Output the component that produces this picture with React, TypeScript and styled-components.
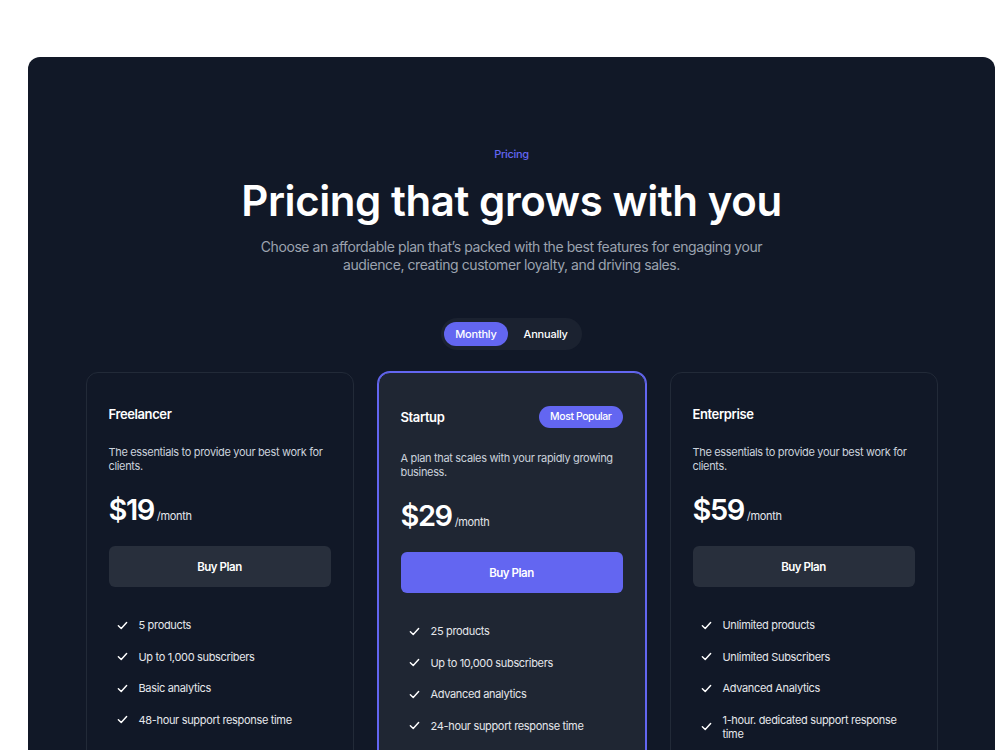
import React, { useState } from "react";
import styled, { createGlobalStyle } from "styled-components";

const GlobalStyle = createGlobalStyle`
  html, body {
    margin: 0;
    padding: 0;
    background: #ffffff;
    overflow: hidden;
    font-family: Inter, "Noto Sans", "Liberation Sans", sans-serif;
    -webkit-font-smoothing: antialiased;
  }
  * { box-sizing: border-box; }
`;

const Panel = styled.section`
  margin: 57px 5px 0 28px;
  min-height: 760px;
  background: #111827;
  border-radius: 12px;
  padding: 89px 0 0;
  display: flex;
  flex-direction: column;
  align-items: center;
`;

const Eyebrow = styled.p`
  margin: 0;
  font-size: 11px;
  line-height: 16px;
  font-weight: 500;
  letter-spacing: -0.03em;
  color: #6366f1;
`;

const Title = styled.h1`
  margin: 14px 0 0;
  font-size: 42px;
  line-height: 50px;
  font-weight: 600;
  letter-spacing: -0.01em;
  color: #ffffff;
`;

const Subtitle = styled.p`
  margin: 12px 0 0;
  max-width: 510px;
  text-align: center;
  font-size: 14px;
  line-height: 18px;
  color: #9ca3af;
  letter-spacing: -0.03em;
`;

const Toggle = styled.div`
  margin-top: 44px;
  display: flex;
  gap: 5px;
  padding: 4px 3px;
  background: #1b2230;
  border-radius: 999px;
`;

const ToggleButton = styled.button<{ $active?: boolean }>`
  border: 0;
  height: 24px;
  padding: 0 11px;
  border-radius: 999px;
  font-family: inherit;
  font-size: 11px;
  font-weight: 500;
  letter-spacing: -0.02em;
  color: #ffffff;
  background: ${({ $active }) => ($active ? "#6366f1" : "transparent")};
  cursor: pointer;
`;

const Grid = styled.div`
  margin-top: 22px;
  width: 852px;
  display: grid;
  grid-template-columns: repeat(3, 1fr);
  gap: 24px;
  align-items: start;
`;

const Card = styled.div<{ $featured?: boolean }>`
  min-height: 420px;
  padding: 33px 22px;
  border-radius: 12px;
  border: 1px solid ${({ $featured }) => ($featured ? "#6366f1" : "#222a38")};
  box-shadow: ${({ $featured }) => ($featured ? "0 0 0 1px #6366f1" : "none")};
  background: ${({ $featured }) => ($featured ? "#1f2633" : "#111827")};
`;

const CardHead = styled.div`
  display: flex;
  justify-content: space-between;
  align-items: center;
`;

const PlanName = styled.h3`
  margin: 0;
  font-size: 13px;
  line-height: 16px;
  font-weight: 600;
  color: #ffffff;
  letter-spacing: -0.03em;
`;

const Badge = styled.span`
  height: 22px;
  padding: 0 11px;
  border-radius: 999px;
  background: #6366f1;
  color: #ffffff;
  font-size: 10.5px;
  line-height: 22px;
  font-weight: 500;
  letter-spacing: -0.04em;
`;

const Description = styled.p`
  margin: 23px 0 0;
  font-size: 11px;
  line-height: 14px;
  color: #cbd2dc;
  letter-spacing: -0.03em;
`;

const PriceRow = styled.div`
  margin-top: 19px;
  display: flex;
  align-items: baseline;
  gap: 3px;
`;

const Amount = styled.span`
  font-size: 29px;
  line-height: 36px;
  font-weight: 600;
  color: #ffffff;
  letter-spacing: -0.05em;
`;

const Period = styled.span`
  font-size: 11px;
  color: #e5e7eb;
  letter-spacing: -0.03em;
`;

const BuyButton = styled.button<{ $featured?: boolean }>`
  margin-top: 18px;
  width: 100%;
  height: 41px;
  border: 0;
  border-radius: 6px;
  font-family: inherit;
  font-size: 11.5px;
  font-weight: 600;
  letter-spacing: -0.04em;
  color: #ffffff;
  background: ${({ $featured }) => ($featured ? "#6366f1" : "#282f3c")};
  cursor: pointer;
`;

const Features = styled.ul`
  list-style: none;
  margin: 31px 0 0;
  padding: 0 0 0 8px;
  display: flex;
  flex-direction: column;
  gap: 17.5px;
`;

const Feature = styled.li`
  display: flex;
  align-items: center;
  gap: 11px;
  font-size: 11px;
  line-height: 14px;
  color: #e5e7eb;
  letter-spacing: -0.03em;
  max-width: 200px;
`;

const Check = () => (
  <svg width="11" height="11" viewBox="0 0 12 12" fill="none" style={{ flexShrink: 0 }}>
    <path d="M1.5 6.3 4.6 9.2 10.5 2.8" stroke="#ffffff" strokeWidth="1.6" strokeLinecap="round" strokeLinejoin="round" />
  </svg>
);

type Plan = {
  name: string;
  description: string;
  price: string;
  features: string[];
  featured?: boolean;
};

const plans: Plan[] = [
  {
    name: "Freelancer",
    description: "The essentials to provide your best work for clients.",
    price: "$19",
    features: ["5 products", "Up to 1,000 subscribers", "Basic analytics", "48-hour support response time"],
  },
  {
    name: "Startup",
    description: "A plan that scales with your rapidly growing business.",
    price: "$29",
    featured: true,
    features: ["25 products", "Up to 10,000 subscribers", "Advanced analytics", "24-hour support response time"],
  },
  {
    name: "Enterprise",
    description: "The essentials to provide your best work for clients.",
    price: "$59",
    features: [
      "Unlimited products",
      "Unlimited Subscribers",
      "Advanced Analytics",
      "1-hour. dedicated support response time",
    ],
  },
];

export default function App() {
  const [billing, setBilling] = useState<"monthly" | "annually">("monthly");
  return (
    <>
      <GlobalStyle />
      <Panel>
        <Eyebrow>Pricing</Eyebrow>
        <Title>Pricing that grows with you</Title>
        <Subtitle>
          Choose an affordable plan that’s packed with the best features for engaging your audience, creating
          customer loyalty, and driving sales.
        </Subtitle>
        <Toggle>
          <ToggleButton $active={billing === "monthly"} onClick={() => setBilling("monthly")}>
            Monthly
          </ToggleButton>
          <ToggleButton $active={billing === "annually"} onClick={() => setBilling("annually")}>
            Annually
          </ToggleButton>
        </Toggle>
        <Grid>
          {plans.map((plan) => (
            <Card key={plan.name} $featured={plan.featured}>
              <CardHead>
                <PlanName>{plan.name}</PlanName>
                {plan.featured && <Badge>Most Popular</Badge>}
              </CardHead>
              <Description>{plan.description}</Description>
              <PriceRow>
                <Amount>{plan.price}</Amount>
                <Period>/month</Period>
              </PriceRow>
              <BuyButton $featured={plan.featured}>Buy Plan</BuyButton>
              <Features>
                {plan.features.map((f) => (
                  <Feature key={f}>
                    <Check />
                    {f}
                  </Feature>
                ))}
              </Features>
            </Card>
          ))}
        </Grid>
      </Panel>
    </>
  );
}
